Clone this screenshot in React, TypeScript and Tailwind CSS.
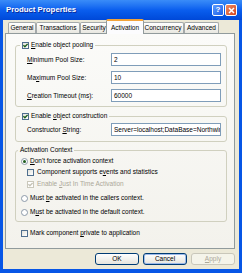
import React from "react";

const U = ({ children }: { children: React.ReactNode }) => <span className="underline">{children}</span>;

function Check({ checked = false, disabled = false }: { checked?: boolean; disabled?: boolean }) {
  return (
    <span
      className={
        disabled
          ? "flex h-[7px] w-[7px] shrink-0 items-center justify-center border border-[#CAC8BB] bg-white"
          : "flex h-[7px] w-[7px] shrink-0 items-center justify-center border border-[#4F6F8E] bg-linear-to-br from-[#E2E2DB] to-white"
      }
    >
      {checked && (
        <svg width="5" height="5" viewBox="0 0 5 5">
          <path d="M0.4 2.2 L1.9 3.8 L4.6 0.9" fill="none" stroke={disabled ? "#C5C3B6" : "#1D5F1D"} strokeWidth="1.4" />
        </svg>
      )}
    </span>
  );
}

function Radio({ checked = false }: { checked?: boolean }) {
  return (
    <span className="flex h-[7px] w-[7px] shrink-0 items-center justify-center rounded-full border border-[#8C9AA8] bg-white">
      {checked && <span className="h-[3px] w-[3px] rounded-full bg-[#1E5E1E]" />}
    </span>
  );
}

function Field({ value }: { value: string }) {
  return (
    <div className="flex h-[13px] w-[110px] items-center overflow-hidden whitespace-nowrap border border-[#7F9DB9] bg-white pl-[2px]">
      {value}
    </div>
  );
}

const tabs = [
  { label: "General", w: "w-[28px]" },
  { label: "Transactions", w: "w-[44px]" },
  { label: "Security", w: "w-[28px]" },
  { label: "Activation", w: "w-[38px]", active: true },
  { label: "Concurrency", w: "w-[42px]" },
  { label: "Advanced", w: "w-[35px]" },
];

export default function App() {
  return (
    <div className="flex h-[273px] w-[242px] flex-col bg-[#0756E6] font-['Liberation_Sans',Arial,sans-serif] text-[6.5px] leading-[8px] text-black">
      {/* title bar */}
      <div className="flex h-[20px] shrink-0 items-center bg-linear-to-b from-[#3A8CF8] via-[#0A5EEE] to-[#0048D8] pl-[6px] pr-[5px]">
        <div className="flex-1 text-[7.8px] font-bold text-white [text-shadow:1px_1px_0_#0A2A9A]">Product Properties</div>
        <div className="flex gap-[1px]">
          <div className="flex h-[12px] w-[12px] items-center justify-center rounded-[2px] border border-white bg-linear-to-br from-[#5C9BFF] to-[#1F5FE8] text-[8px] font-bold text-white">
            ?
          </div>
          <div className="flex h-[12px] w-[12px] items-center justify-center rounded-[2px] border border-white bg-linear-to-br from-[#EE8A63] to-[#D2421A]">
            <svg width="7" height="7" viewBox="0 0 7 7">
              <path d="M1 1 L6 6 M6 1 L1 6" stroke="white" strokeWidth="1.5" />
            </svg>
          </div>
        </div>
      </div>

      {/* client area */}
      <div className="mx-[3px] mb-[4px] flex flex-1 flex-col bg-[#ECE9D8]">
        <div className="flex h-[13px] shrink-0 items-end pl-[5px]">
          {tabs.map((t) =>
            t.active ? (
              <div
                key={t.label}
                className={`relative z-10 -mx-[2px] -mb-[1px] flex h-[15px] items-center justify-center rounded-t-[2px] border border-b-0 border-[#919B9C] border-t-2 border-t-[#F2A33A] bg-[#FCFCFE] px-[2px] ${t.w}`}
              >
                {t.label}
              </div>
            ) : (
              <div
                key={t.label}
                className={`flex h-[11px] items-center justify-center rounded-t-[2px] border border-b-0 border-[#A4A9AA] bg-linear-to-b from-white to-[#E8E7E0] ${t.w}`}
              >
                {t.label}
              </div>
            )
          )}
        </div>

        {/* tab panel */}
        <div className="ml-[2px] mr-[4px] flex h-[216px] shrink-0 flex-col border border-[#919B9C] bg-linear-to-b from-[#FBFBF9] to-[#F3F2EC] pl-[9px] pr-[7px]">
          <fieldset className="mt-[7px] rounded-[3px] border border-[#D0D0BF] pb-[4px]">
            <legend className="ml-[4px] flex h-[8px] items-center gap-[2px] px-[2px]">
              <Check checked />
              <span>
                <U>E</U>nable object pooling
              </span>
            </legend>
            <div className="flex flex-col gap-[5px] pl-[11px] pt-[4px]">
              <div className="flex items-center">
                <span className="w-[84px]">
                  <U>M</U>inimum Pool Size:
                </span>
                <Field value="2" />
              </div>
              <div className="flex items-center">
                <span className="w-[84px]">
                  Ma<U>x</U>imum Pool Size:
                </span>
                <Field value="10" />
              </div>
              <div className="flex items-center">
                <span className="w-[84px]">
                  <U>C</U>reation Timeout (ms):
                </span>
                <Field value="60000" />
              </div>
            </div>
          </fieldset>

          <fieldset className="mt-[5px] rounded-[3px] border border-[#D0D0BF] pb-[5px]">
            <legend className="ml-[4px] flex h-[8px] items-center gap-[2px] px-[2px]">
              <Check checked />
              <span>
                Enable <U>o</U>bject construction
              </span>
            </legend>
            <div className="flex items-center pl-[11px] pt-[3px]">
              <span className="w-[84px]">
                Constructor <U>S</U>tring:
              </span>
              <Field value="Server=localhost;DataBase=Northwin" />
            </div>
          </fieldset>

          <fieldset className="mt-[4px] rounded-[3px] border border-[#D0D0BF] pb-[4px]">
            <legend className="ml-[2px] h-[8px] px-[2px]">Activation Context</legend>
            <div className="flex flex-col pl-[5px] pt-[2px]">
              <div className="flex h-[10px] items-center gap-[2px]">
                <Radio checked />
                <span>
                  <U>D</U>on&apos;t force activation context
                </span>
              </div>
              <div className="mt-[1px] flex h-[10px] items-center gap-[3px] pl-[6px]">
                <Check />
                <span>
                  Component supports e<U>v</U>ents and statistics
                </span>
              </div>
              <div className="mt-[2px] flex h-[10px] items-center gap-[3px] pl-[6px] text-[#ACA899]">
                <Check checked disabled />
                <span>
                  Enable <U>J</U>ust In Time Activation
                </span>
              </div>
              <div className="mt-[4px] flex h-[10px] items-center gap-[2px]">
                <Radio />
                <span>
                  Must <U>b</U>e activated in the callers context.
                </span>
              </div>
              <div className="mt-[4px] flex h-[10px] items-center gap-[2px]">
                <Radio />
                <span>
                  M<U>u</U>st be activated in the default context.
                </span>
              </div>
            </div>
          </fieldset>

          <div className="ml-[6px] mt-[6px] flex h-[10px] items-center gap-[2px]">
            <Check />
            <span>
              Mark component <U>p</U>rivate to application
            </span>
          </div>
        </div>

        {/* buttons */}
        <div className="mr-[4px] mt-[4px] flex justify-end gap-[4px]">
          <div className="flex h-[12px] w-[44px] items-center justify-center rounded-[3px] border border-[#003C74] bg-linear-to-b from-white to-[#E6E5DE]">
            OK
          </div>
          <div className="flex h-[12px] w-[44px] items-center justify-center rounded-[3px] border border-[#003C74] bg-linear-to-b from-white to-[#E6E5DE] shadow-[inset_0_0_0_1px_#9DBAEA]">
            Cancel
          </div>
          <div className="flex h-[12px] w-[44px] items-center justify-center rounded-[3px] border border-[#C9C7BA] bg-[#F5F4EA] text-[#ACA899]">
            <span>
              <U>A</U>pply
            </span>
          </div>
        </div>
      </div>
    </div>
  );
}
